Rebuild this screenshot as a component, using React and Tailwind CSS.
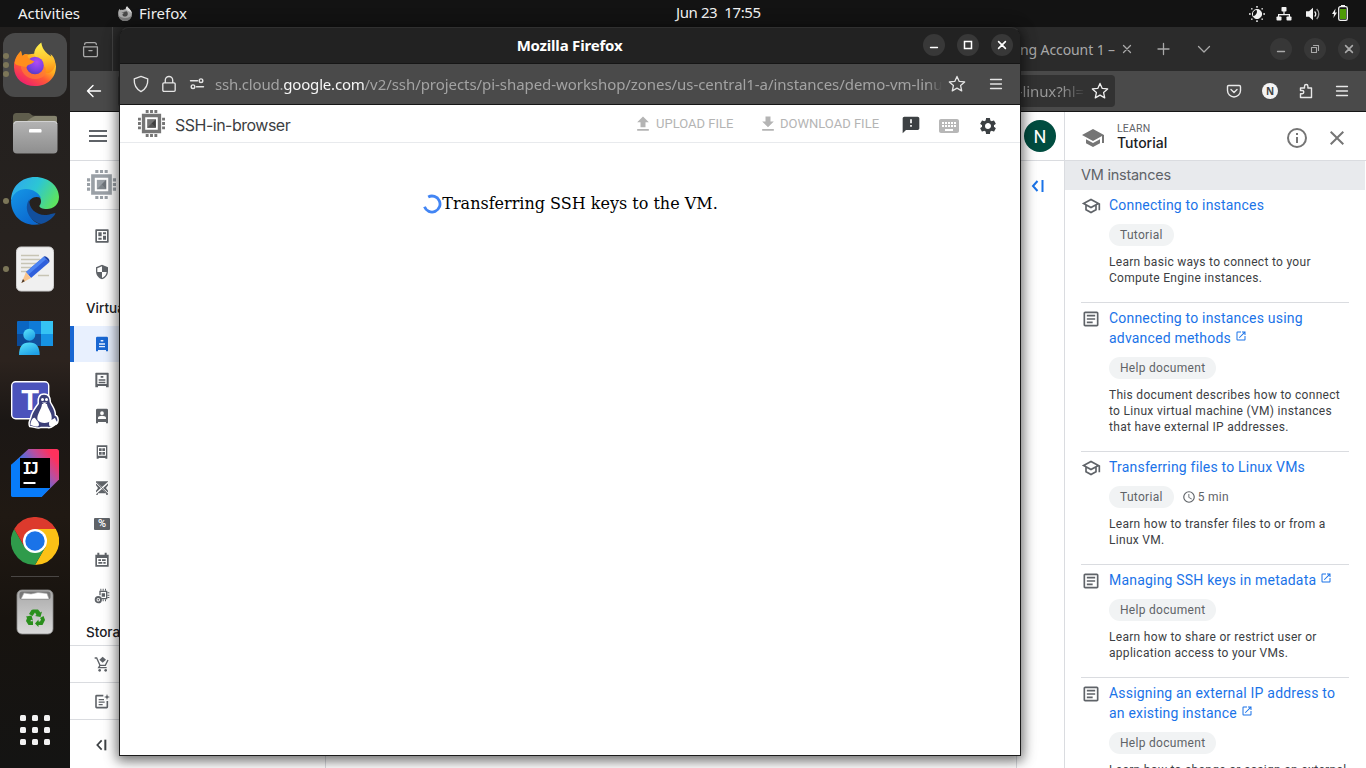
import React from "react";

const UI = "font-['Noto_Sans','Open_Sans',sans-serif]";
const GS = "font-['Inter',sans-serif]";

function Svg({ box = "0 0 24 24", className = "", children }) {
  return (
    <svg viewBox={box} className={`block shrink-0 ${className}`} fill="currentColor">
      {children}
    </svg>
  );
}

function Stroke({ box = "0 0 16 16", className = "", w = 1.3, children }) {
  return (
    <svg
      viewBox={box}
      className={`block shrink-0 ${className}`}
      fill="none"
      stroke="currentColor"
      strokeWidth={w}
      strokeLinecap="round"
      strokeLinejoin="round"
    >
      {children}
    </svg>
  );
}

/* ---------- top bar ---------- */

function SmallFirefox() {
  return (
    <svg viewBox="0 0 16 16" className="block h-[16px] w-[16px]">
      <path d="M1.2 8C1 5.500 1.800 3.800 2.800 2.800L3.400 4.200C4 3.700 5 3.700 5.400 3.900L8.600 3C8.500 1.900 9.300 .9 10.200 .3C10.500 2 14.600 3.500 14.900 7.800C15.100 11.800 12 15 8.100 15S1.300 12 1.200 8z" fill="#a9a9a9" />
      <path d="M1.200 9.500C2 13 5 15 8.100 15C12 15 14.600 12 14.900 9C13 12.500 5 13 1.200 9.500z" fill="#7c7c7c" />
      <path d="M4.200 6.400L7.500 6.800C6.200 7.600 5.200 8 5.500 9C6.500 11.400 10.500 10.800 10.800 8.200C11 6.200 9.600 5.300 9.600 5.300" fill="#494949" />
      <path d="M10.200 .3C10.500 2 14.600 3.500 14.900 7.800C13.800 5.500 11 5 9.800 4C8.200 2.600 9.300 .9 10.200 .3z" fill="#dcdcdc" />
    </svg>
  );
}

function TopBar() {
  return (
    <div className={`flex h-[27px] shrink-0 items-center bg-[#131313] text-[15px] text-[#f2f2f2] ${UI}`}>
      <div className="h-[27px] w-[117px] pl-[18px] leading-[26px] tracking-[-0.05px]">Activities</div>
      <SmallFirefox />
      <div className="h-[27px] w-[543px] pl-[6px] leading-[26px]">Firefox</div>
      <div className="h-[27px] flex-1 whitespace-pre leading-[25px] tracking-[-0.4px]">Jun 23  17:55</div>
      <div className="flex w-[118px] items-center">
        <svg viewBox="0 0 18 18" className="block h-[18px] w-[18px]">
          <circle cx="9" cy="9" r="4.600" fill="none" stroke="#f2f2f2" strokeWidth="1" />
          <path d="M8.500 4.400A4.600 4.600 0 1 1 5 11.300A5 5 0 0 0 8.500 4.400z" fill="#f2f2f2" />
          <g fill="#b9b9b9">
            <rect x="8" y="1" width="2" height="1.700" /><rect x="8" y="15.300" width="2" height="1.700" />
            <rect x="1" y="8" width="1.700" height="2" /><rect x="15.300" y="8" width="1.700" height="2" />
            <rect x="3" y="3" width="1.600" height="1.600" /><rect x="13.400" y="3" width="1.600" height="1.600" />
            <rect x="3" y="13.400" width="1.600" height="1.600" /><rect x="13.400" y="13.400" width="1.600" height="1.600" />
          </g>
        </svg>
        <svg viewBox="0 0 16 16" className="ml-[10px] block h-[16px] w-[16px]" fill="#f2f2f2">
          <rect x="5.500" y="1" width="5" height="4.500" rx=".8" />
          <path d="M7.400 5h1.200v3H14v3h-1.200V9.200H3.200V11H2V8h5.400z" />
          <rect x=".5" y="10.500" width="5" height="4" rx=".8" /><rect x="10.500" y="10.500" width="5" height="4" rx=".8" />
        </svg>
        <svg viewBox="0 0 16 16" className="ml-[13px] block h-[16px] w-[16px]" fill="#f2f2f2">
          <path d="M1 5.200h3L8 1.700v12.600L4 10.800H1z" />
          <path d="M9.600 5.400a3.500 3.500 0 0 1 0 5.200" fill="none" stroke="#f2f2f2" strokeWidth="1.300" />
          <path d="M11.700 3a7 7 0 0 1 0 10" fill="none" stroke="#9a9a9a" strokeWidth="1.300" />
        </svg>
        <svg viewBox="0 0 18 18" className="mb-[2px] ml-[10px] block h-[18px] w-[18px]">
          <path d="M4.500 4.500L1 10h2l-.6 4L6 8.500H4z" fill="#f2f2f2" />
          <path d="M10 1h4v2h-4z" fill="#f2f2f2" />
          <rect x="7.700" y="2.700" width="8.600" height="13.600" rx="1.600" fill="#131313" stroke="#f2f2f2" strokeWidth="1.300" />
          <rect x="9" y="5" width="6" height="10" fill="#4e9a06" />
        </svg>
      </div>
    </div>
  );
}

/* ---------- dock ---------- */

function FirefoxLogo() {
  return (
    <svg viewBox="0 0 48 48" className="block h-12 w-12">
      <defs>
        <linearGradient id="ffBody" x1=".85" y1=".1" x2=".2" y2=".95">
          <stop offset="0" stopColor="#ffe23e" />
          <stop offset=".35" stopColor="#ffab1f" />
          <stop offset=".6" stopColor="#ff5a36" />
          <stop offset="1" stopColor="#ee1c70" />
        </linearGradient>
        <linearGradient id="ffFlame" x1=".5" y1="0" x2=".6" y2="1">
          <stop offset="0" stopColor="#fff14d" />
          <stop offset=".6" stopColor="#ffc02c" />
          <stop offset="1" stopColor="#ff8a16" />
        </linearGradient>
        <radialGradient id="ffGlobe" cx=".6" cy=".3" r=".8">
          <stop offset="0" stopColor="#b04bf5" />
          <stop offset=".6" stopColor="#7a3fe0" />
          <stop offset="1" stopColor="#4a3bb8" />
        </radialGradient>
      </defs>
      <path d="M3 26.500C2.800 20 5 15 10 10L11 15C13 13 15 13 16.500 13.500L29 12C35 11 43 15 45 25C45 37.500 36 45 24 45C12 45 3.300 37.500 3 26.500z" fill="url(#ffBody)" />
      <path d="M30.300 1.500C22.500 7 21.500 14.500 25.500 17C31 19 33.500 24 31.500 29.500C37 35 42 31 44.500 24C44.500 18 41.500 14.500 39.500 13L40.500 17C37 12.500 31.500 10 30.300 1.500z" fill="url(#ffFlame)" />
      <path d="M9.500 20.500C14 19.500 20 19.500 23.300 21.300L34 26C37 33 32 38 24.500 38C15 38 9 31 9.500 20.500z" fill="#ff7a33" opacity=".7" />
      <circle cx="24" cy="24.500" r="8.800" fill="url(#ffGlobe)" />
      <path d="M3.500 22C4.500 17 6.800 13 10 10L11 15C13 13 15 13 17 13.500C16 15 16.500 17 20 19L23.500 20.500C20 24 17 23 15.500 26C11 25 5 25 3.500 22z" fill="#ff8f1c" />
    </svg>
  );
}

function FolderLogo() {
  return (
    <svg viewBox="0 0 48 48" className="block h-12 w-12">
      <defs>
        <linearGradient id="fold" x1="0" y1="0" x2="0" y2="1">
          <stop offset="0" stopColor="#b4b4b4" /><stop offset="1" stopColor="#8e8e8e" />
        </linearGradient>
      </defs>
      <path d="M2 7.500a3.500 3.500 0 0 1 3.500-3.500H17c3 0 3 2.700 6 2.700h20.500A2.500 2.500 0 0 1 46 9.500V20H2z" fill="#5f5d4c" />
      <path d="M20 9L24 7H44a2 2 0 0 1 2 2v6H12z" fill="#85836e" />
      <rect x="2" y="12" width="44.500" height="32.500" rx="4" fill="url(#fold)" />
      <path d="M3 15a3 3 0 0 1 3-2.500h37a3 3 0 0 1 3 2.500" fill="none" stroke="#d2d2d2" strokeWidth="1" />
      <rect x="18" y="20" width="12.500" height="3.600" rx="1.200" fill="#fff" />
    </svg>
  );
}

function EdgeLogo() {
  return (
    <svg viewBox="0 0 48 48" className="block h-12 w-12">
      <defs>
        <linearGradient id="edgeTop" x1="0" y1=".2" x2="1" y2=".6">
          <stop offset="0" stopColor="#2fa8ee" /><stop offset=".5" stopColor="#2cc6d4" /><stop offset="1" stopColor="#5de35f" />
        </linearGradient>
        <linearGradient id="edgeLeft" x1="0" y1="0" x2=".6" y2="1">
          <stop offset="0" stopColor="#1597e6" /><stop offset="1" stopColor="#0b68cf" />
        </linearGradient>
      </defs>
      <path d="M0 24C0 9 11 0 24 0C38 0 48 9.500 48 20C48 28 42 32 36 32C31 32 28 30.500 28.500 28.500C30.500 26.500 31 22 27 18C20 11 5 12 0 24z" fill="url(#edgeTop)" />
      <path d="M0 24C2 16 8 12 15 12C22 12 28 16 30 21C22 18 17 23 17 30C17 40 24 47 30 47C14 51 0 40 0 24z" fill="url(#edgeLeft)" />
      <path d="M18.500 22C12 31 18 44 30 47C37 45 42 41 44.500 36.500C44 35.500 39 38 34 38C25 38 17 31 18.500 22z" fill="#124f9d" />
    </svg>
  );
}

function NotesLogo() {
  return (
    <svg viewBox="0 0 48 48" className="block h-12 w-12">
      <rect x="5.500" y="2" width="37" height="44" rx="4.500" fill="#f0f0f0" stroke="#cfcfcf" strokeWidth="1" />
      <path d="M10 10.500h18M10 14.500h19M10 18.500h19M10 22.500h13M10 26.500h9M27 30.500h11" stroke="#c7c4b4" strokeWidth="1.700" />
      <path d="M15 27L33 11.500L38 17.500L20 33z" fill="#2f5fdb" />
      <path d="M33 11.500L35.300 13.900L17 30L15 27z" fill="#4d84f2" />
      <path d="M15 27L20 33L10.500 38z" fill="#f8c48c" />
      <path d="M12 34L13.800 36.300L10.300 38z" fill="#4d3b2e" />
      <path d="M33 11.500C35 10 40 15 38 17.500z" fill="#1c3fa5" />
    </svg>
  );
}

function PeopleLogo() {
  return (
    <svg viewBox="0 0 48 48" className="block h-12 w-12">
      <defs>
        <linearGradient id="ppl" x1="0" y1="0" x2=".6" y2="1"><stop offset="0" stopColor="#5ce5fb" /><stop offset="1" stopColor="#1fa0e6" /></linearGradient>
      </defs>
      <rect x="6" y="8" width="36" height="25" rx="1" fill="#0a66c2" />
      <rect x="6" y="21" width="12" height="12" fill="#0b4a97" />
      <rect x="18" y="8" width="12" height="13" fill="#0f7bd8" />
      <rect x="18" y="21" width="12" height="12" fill="#12509c" />
      <rect x="30" y="8" width="12" height="13" fill="#35c3f3" />
      <rect x="30" y="21" width="12" height="12" fill="#1693e3" />
      <circle cx="18.300" cy="21.800" r="6" fill="url(#ppl)" />
      <path d="M8 42c0-8 3-12.500 10.300-12.500S28.700 34 28.700 42z" fill="url(#ppl)" />
    </svg>
  );
}

function TeamsLogo() {
  return (
    <svg viewBox="0 0 50 48" className="ml-0.5 block h-12 w-[50px]">
      <rect x=".7" y=".7" width="37" height="37" rx="4" fill="#4b53bc" stroke="#fff" strokeWidth="1.400" />
      <text x="19" y="29" textAnchor="middle" fontFamily="Liberation Sans, sans-serif" fontWeight="700" fontSize="29" fill="#fff">T</text>
      <path d="M33 13c5 0 6.500 4 6.300 8c2 4 5.700 8 5 13c3 1 4 7 1 9c-3 1-5 5-8.500 3.500h-7c-3 2-7-1-11-1c-2-3 0-6 1-9c1-6 5-10 7.500-14c-.5-5 .5-9.500 5.700-9.500z" fill="#3b3f78" stroke="#fff" strokeWidth="1.500" />
      <path d="M31 23h5c0 4 6 9 4.500 16c-3 4-11 4-14 0c-1-6 4-10 4.500-16z" fill="#fff" />
      <path d="M19.500 44c0-3 2-8 4.500-7c2 3 4 4 4 7c-1 3-5 1-8.500 0zM38.500 39c2 1 5-2 5.500-2c1 3 3 4 2.500 6c-2 1-5 3-7.500 2.500c-1.500-1-1-4-.5-6.500z" fill="#fff" />
      <circle cx="31.500" cy="18.500" r="1.500" fill="#fff" /><circle cx="35.500" cy="18.500" r="1.500" fill="#fff" />
      <path d="M31 21.500h5l-2.500 2z" fill="#fff" />
    </svg>
  );
}

function IntelliJLogo() {
  return (
    <svg viewBox="0 0 48 48" className="block h-12 w-12">
      <defs>
        <linearGradient id="ijA" x1=".1" y1=".8" x2=".95" y2=".15">
          <stop offset="0" stopColor="#087cfa" /><stop offset=".4" stopColor="#3f73e8" /><stop offset=".7" stopColor="#b94fa0" /><stop offset=".95" stopColor="#fe315d" />
        </linearGradient>
      </defs>
      <path d="M17.500 0H45.500A2.500 2.500 0 0 1 48 2.500V30.500L30.500 48H2.500A2.500 2.500 0 0 1 0 45.500V16z" fill="url(#ijA)" />
      <path d="M0 16L9 9V39H39L30.500 48H2.500A2.500 2.500 0 0 1 0 45.500z" fill="#087cfa" />
      <rect x="9" y="9" width="30" height="30" fill="#000" />
      <text x="11.500" y="24.500" fontFamily="DejaVu Sans Mono, monospace" fontWeight="700" fontSize="15.500" letterSpacing="-2" fill="#fff">IJ</text>
      <rect x="12.500" y="33" width="12" height="2" fill="#fff" />
    </svg>
  );
}

function ChromeLogo() {
  return (
    <svg viewBox="0 0 48 48" className="block h-12 w-12">
      <path d="M24 24L3.200 12A24 24 0 0 1 44.800 12z" fill="#dc3a2d" />
      <path d="M24 12H44.800A24 24 0 0 1 24 48L34.400 30z" fill="#fbc116" />
      <path d="M13.600 30L3.200 12A24 24 0 0 0 24 48L34.400 30z" fill="#2f9b4b" />
      <path d="M13.600 30L3.200 12L18 16z" fill="#dc3a2d" />
      <circle cx="24" cy="24" r="12" fill="#fff" />
      <circle cx="24" cy="24" r="9.700" fill="#1a73e8" />
    </svg>
  );
}

function TrashLogo() {
  return (
    <svg viewBox="0 0 48 48" className="block h-12 w-12">
      <defs>
        <linearGradient id="trash" x1="0" y1="0" x2="0" y2="1"><stop offset="0" stopColor="#a9a9a9" /><stop offset="1" stopColor="#dadada" /></linearGradient>
      </defs>
      <rect x="6" y="2" width="36" height="44" rx="5" fill="url(#trash)" stroke="#8c8c8c" strokeWidth=".8" />
      <rect x="8.500" y="3.500" width="31" height="8" rx="2.500" fill="#777" />
      <path d="M10 11L13 5L20 6L27 4.500L36 5.500L38 11z" fill="#fff" stroke="#aaa" strokeWidth=".6" />
      <g fill="#2a8f1c">
        <path d="M20.500 22L22 21.500h5l2.500 3l1.500-1l-1.500 5.500l-5.500-1l1.500-1L24 24.500L21.500 28L18 26z" />
        <path d="M32.500 28L34 32L31.500 37H27.500V39L24 35.500L27.500 31.500V33.500H29L30 31.500L29 30z" />
        <path d="M15 28.500L20.500 27.500L22 32.500L20 31.700L19.500 33.300H22V37H17.500L15 33L16 30z" />
      </g>
    </svg>
  );
}

function DockItem({ dots = 0, active = false, children }) {
  return (
    <div className="flex h-16 w-full items-center">
      <div className="relative z-10 flex w-[3px] flex-col items-start gap-[3px] pl-[3px]">
        {Array.from({ length: dots }).map((_, i) => (
          <span key={i} className="block h-[6px] w-[6px] rounded-full bg-[#7c7658]" />
        ))}
      </div>
      <div className={`flex h-16 w-16 shrink-0 items-center justify-center rounded-[12px] ${active ? "bg-[#494949]" : ""}`}>
        {children}
      </div>
    </div>
  );
}

function Dock() {
  return (
    <div className="flex w-[70px] shrink-0 flex-col bg-[linear-gradient(180deg,#211f1e_0%,#27221f_28%,#2c231e_45%,#1b1715_53%,#201913_66%,#17130f_80%,#141413_100%)] pt-[6px]">
      <div className="flex flex-col gap-1">
        <DockItem dots={3} active><FirefoxLogo /></DockItem>
        <DockItem><FolderLogo /></DockItem>
        <DockItem dots={1}><EdgeLogo /></DockItem>
        <DockItem dots={1}><NotesLogo /></DockItem>
        <DockItem><PeopleLogo /></DockItem>
        <DockItem><TeamsLogo /></DockItem>
        <DockItem><IntelliJLogo /></DockItem>
        <DockItem><ChromeLogo /></DockItem>
      </div>
      <div className="mx-[11px] mt-[3px] mb-[3px] h-px bg-[#494644]" />
      <DockItem><TrashLogo /></DockItem>
      <div className="mt-[71px] grid grid-cols-3 gap-[6px] self-center">
        {Array.from({ length: 9 }).map((_, i) => (
          <span key={i} className="block h-[6px] w-[6px] rounded-[1.500px] bg-[#f2f2f2]" />
        ))}
      </div>
    </div>
  );
}

/* ---------- main browser window ---------- */

const STAR = "M8 1.300l2 4.400 4.800.5-3.600 3.200 1 4.700L8 11.700l-4.200 2.400 1-4.700L1.200 6.200 6 5.700z";

function WinButton({ kind, className }) {
  return (
    <span className={`flex h-[22px] w-[22px] items-center justify-center rounded-full ${className}`}>
      <Stroke box="0 0 12 12" className="h-3 w-3" w={kind === "close" ? 1.6 : 1.3}>
        {kind === "min" && <path d="M2.500 8.500h7" />}
        {kind === "max" && <path d="M2.500 2.500h7v7h-7z" strokeWidth="1.500" strokeLinejoin="miter" />}
        {kind === "restore" && <path d="M2.500 4.500h5v5h-5zM4.500 2.500h5v5" strokeWidth="1.100" />}
        {kind === "close" && <path d="M2.600 2.600l6.800 6.800M9.400 2.600l-6.800 6.800" />}
      </Stroke>
    </span>
  );
}

function Cell({ w, children }) {
  return <div className={`flex shrink-0 items-center justify-center ${w}`}>{children}</div>;
}

function TabStrip() {
  return (
    <div className={`flex h-11 shrink-0 bg-[#2b2b2b] text-[#a9a9a9] ${UI}`}>
      <div className="flex w-[43px] items-center justify-center border-r border-[#454545] pr-[2px]">
        <Stroke className="h-[17px] w-[17px]" w={1.2}>
          <path d="M1.500 5.500h13v8a1.200 1.200 0 0 1-1.200 1.200H2.700a1.200 1.200 0 0 1-1.200-1.200zM2.500 3.300q0-1.800 1.800-1.800h7.400q1.800 0 1.800 1.800M6.500 9h3" />
        </Stroke>
      </div>
      <div className="flex flex-1 items-center justify-end">
        <span className="whitespace-nowrap text-[14px] tracking-[-0.1px] text-[#a8a8a8]">ng Account 1 –</span>
        <Cell w="w-[29px] pr-[6px]"><Stroke className="h-4 w-4" w={1.3}><path d="M4.500 4.500l7 7M11.500 4.500l-7 7" /></Stroke></Cell>
        <Cell w="w-[40px]"><Stroke className="h-4 w-4" w={1.3}><path d="M7.500 2.500v11M2 8h11" /></Stroke></Cell>
        <Cell w="w-[40px]"><Stroke className="h-4 w-4" w={1.3}><path d="M2.500 5.500L8 11l5.500-5.500" /></Stroke></Cell>
      </div>
      <div className="ml-10 flex w-[102px] items-center">
        <Cell w="w-[34px]"><WinButton kind="min" className="bg-[#373737]" /></Cell>
        <Cell w="w-[34px]"><WinButton kind="restore" className="bg-[#373737]" /></Cell>
        <Cell w="w-[34px]"><WinButton kind="close" className="bg-[#373737]" /></Cell>
      </div>
    </div>
  );
}

function NavBar() {
  return (
    <div className={`flex h-[41px] shrink-0 items-center border-b border-[#151515] bg-[#4a4a4a] text-[#e8e8e8] ${UI}`}>
      <Cell w="w-[48px]"><Stroke className="h-4 w-4 text-white" w={1.4}><path d="M14.500 8h-13M7 2.500L1.500 8L7 13.500" /></Stroke></Cell>
      <div className="flex h-8 flex-1 items-center justify-end rounded-[4px] bg-[#323232]">
        <span className="bg-gradient-to-r from-[#9a9a9a] from-70% to-[#3b3b3b] bg-clip-text text-[15px] tracking-[-0.1px] text-transparent">n-linux?hl=</span>
        <Cell w="w-[31px]"><Stroke className="h-[18px] w-[18px] text-[#f0f0f0]" w={1.15}><path d={STAR} /></Stroke></Cell>
      </div>
      <div className="ml-[101px] flex w-[150px] items-center">
        <Cell w="w-9">
          <Stroke className="h-4 w-4" w={1.4}><path d="M2.700 2.500h10.600a1.200 1.200 0 0 1 1.200 1.200V7.500a6.500 6.500 0 0 1-13 0V3.700a1.200 1.200 0 0 1 1.200-1.200zM5 6.500l3 3 3-3" /></Stroke>
        </Cell>
        <Cell w="w-9">
          <span className="flex h-4 w-4 items-center justify-center rounded-full bg-[#f4f4f4] text-[10px] font-bold leading-4 text-[#444]">N</span>
        </Cell>
        <Cell w="w-9">
          <Stroke className="h-4 w-4" w={1.4}><path d="M2.500 14.500v-3.800h1.700a1.600 1.600 0 0 0 0-3.200H2.500V5h4V3.200a1.700 1.700 0 0 1 3.400 0V5h3.600v9.500z" /></Stroke>
        </Cell>
        <Cell w="w-9"><Stroke className="h-4 w-4" w={1.3}><path d="M2.500 3.500h11M2.500 8h11M2.500 12.500h11" /></Stroke></Cell>
      </div>
    </div>
  );
}

function ChipLogo({ className, frame, core, shade }) {
  return (
    <svg viewBox="0 0 28 28" className={`block shrink-0 ${className}`}>
      <g fill={frame}>
        <path fillRule="evenodd" d="M4 4h20v20H4zM7.500 7.500v13h13v-13z" />
        <path d="M8 0h3v3H8zM12.500 0h3v3h-3zM17 0h3v3h-3zM8 25h3v3H8zM12.500 25h3v3h-3zM17 25h3v3h-3zM0 8h3v3H0zM0 12.500h3v3H0zM0 17h3v3H0zM25 8h3v3h-3zM25 12.500h3v3h-3zM25 17h3v3h-3z" />
      </g>
      <rect x="9.500" y="9.500" width="9" height="9" fill={core} />
      <path d="M18.500 9.500v9l-4.500-4.500z" fill={shade} />
      <path d="M9.500 18.500h9l-4.500-4.500z" fill={shade} opacity=".6" />
    </svg>
  );
}

const NAV_ICONS = {
  dashboard: (
    <path fillRule="evenodd" d="M3 2h18a1 1 0 0 1 1 1v18a1 1 0 0 1-1 1H3a1 1 0 0 1-1-1V3a1 1 0 0 1 1-1zM4.500 4.500v15h15v-15zM6.500 6.500h5v6h-5zM13.500 6.500h4.500v3h-4.500zM13.500 11.500h4.500v6h-4.500zM6.500 14.500h5v3h-5z" />
  ),
  shield: (
    <path fillRule="evenodd" d="M12 1L3 5v6c0 5.550 3.840 10.740 9 12 5.160-1.260 9-6.450 9-12V5zM12 12h7c-.5 4-3.500 7.800-7 8.900V12H5V6.300l7-3.100z" />
  ),
  server: <path fillRule="evenodd" d="M5 1h14a2 2 0 0 1 2 2v20h-3v-2H6v2H3V3a2 2 0 0 1 2-2zM10 6v2.200h4V6zM7.500 11v2h9v-2zM7.500 15v2h9v-2z" />,
  serverOutline: <path fillRule="evenodd" d="M3 1h18a1 1 0 0 1 1 1v21h-4v-2H6v2H2V2a1 1 0 0 1 1-1zM5 4v14h14V4zM10 6h4v2.500h-4zM7 11h10v2H7zM7 14.800h10v2H7z" />,
  group: <path fillRule="evenodd" d="M5 1h14a2 2 0 0 1 2 2v20h-3v-2H6v2H3V3a2 2 0 0 1 2-2zM12 5a2.800 2.800 0 1 0 0 5.600a2.800 2.800 0 1 0 0-5.600zM6 16.500h12v-2c0-1.500-3.500-2.700-6-2.700s-6 1.200-6 2.700z" />,
  storage: <path fillRule="evenodd" d="M4 2h16v20h-3v-1H7v1H4zM6 4.500v13h12v-13zM7.500 6.500h4v4h-4zM12.500 6.500h4v4h-4zM7.500 12h4v4h-4zM12.500 12h4v4h-4z" />,
  noServer: (
    <g>
      <path d="M3 2h18v20h-3v-2H6v2H3z" />
      <path d="M2 3l20 18M22 3L2 21" stroke="#fff" strokeWidth="2.200" />
      <path d="M2 6.500v11l4-5.500zM22 6.500v11l-4-5.500z" fill="#fff" />
      <path d="M3 3l18 18" stroke="currentColor" strokeWidth="1.200" />
    </g>
  ),
  calendar: <path fillRule="evenodd" d="M5 1h3v3h8V1h3v3h3v18H2V4h3zM4.500 9v10.500h15V9zM6.500 11h4v2.500h-4zM12 11h5.500v2.500H12zM6.500 15h6v2.500h-6zM14 15h3.500v2.500H14z" />,
  chipGear: (
    <g>
      <path fillRule="evenodd" d="M8 4h12v13h-9v-2h7V6h-8v5H8zM11.500 8h5v5h-5z" />
      <path d="M9.500 1h1.500v3H9.500zM13 1h1.500v3H13zM16.500 1H18v3h-1.500zM20 6.500h3V8h-3zM20 10h3v1.500h-3zM20 13.500h3V15h-3zM16.500 17H18v3h-1.500zM13 17h1.500v3H13z" />
      <circle cx="6.500" cy="17.500" r="4" fill="none" stroke="currentColor" strokeWidth="2.800" />
      <circle cx="6.500" cy="17.500" r="1.300" />
    </g>
  ),
  cart: (
    <g>
      <path d="M13 1l5 4.500-5 4.500-5-4.500z" />
      <path d="M1 3h3l5 11h8l4-8" fill="none" stroke="currentColor" strokeWidth="2" />
      <path d="M9 14l-2 3.500h12" fill="none" stroke="currentColor" strokeWidth="2" />
      <circle cx="8.500" cy="21.500" r="2" /><circle cx="17.500" cy="21.500" r="2" />
    </g>
  ),
  note: (
    <g>
      <path d="M14 4H4a1 1 0 0 0-1 1v16a1 1 0 0 0 1 1h15a1 1 0 0 0 1-1V12" fill="none" stroke="currentColor" strokeWidth="2.400" />
      <path d="M7 9h8v2H7zM7 12.700h9v2H7zM7 16.400h6v2H7z" />
      <path d="M19.500 1.500l1.200 3.300 3.300 1.200-3.300 1.200-1.200 3.300-1.200-3.300-3.300-1.200 3.300-1.200z" />
    </g>
  ),
};

function NavRow({ icon, active }) {
  return (
    <div className={`flex h-9 items-center ${active ? "border-l-4 border-[#1967d2] bg-[#e8f0fe] pl-[20px] text-[#1967d2]" : "pl-6 text-[#5f6368]"}`}>
      <Svg className="h-4 w-4">{NAV_ICONS[icon]}</Svg>
    </div>
  );
}

function DiscountRow() {
  return (
    <div className="flex h-9 items-center pl-6">
      <span className="flex h-3 w-4 items-center justify-center rounded-[1px] bg-[#5f6368] font-['Roboto',sans-serif] text-[11px] font-medium leading-3 text-white">%</span>
    </div>
  );
}

function SideNav() {
  return (
    <div className="flex w-[256px] shrink-0 flex-col border-r border-[#dadce0]">
      <div className="flex h-[49px] items-center border-b border-[#dadce0] pb-[1px] pl-[17px]">
        <ChipLogo className="h-[29px] w-[29px]" frame="#9aa0a6" core="#9aa0a6" shade="#6e747a" />
      </div>
      <div className="flex flex-col pt-2">
        <NavRow icon="dashboard" />
        <NavRow icon="shield" />
        <div className={`h-9 pl-4 text-[13.500px] font-medium leading-9 text-[#202124] ${GS}`}>Virtua</div>
        <NavRow icon="server" active />
        <NavRow icon="serverOutline" />
        <NavRow icon="group" />
        <NavRow icon="storage" />
        <NavRow icon="noServer" />
        <DiscountRow />
        <NavRow icon="calendar" />
        <NavRow icon="chipGear" />
        <div className={`h-[31px] pl-4 text-[13.500px] font-medium leading-9 text-[#202124] ${GS}`}>Storag</div>
      </div>
      <div className="border-t border-[#dadce0]"><NavRow icon="cart" /></div>
      <div className="border-t border-[#dadce0]"><NavRow icon="note" /></div>
      <div className="flex items-center border-t border-[#dadce0] pl-6 pt-[17px] text-[#3c4043]">
        <Svg className="h-4 w-4">
          <path d="M11.500 5L5 12l6.500 7" fill="none" stroke="currentColor" strokeWidth="2.600" />
          <path d="M15.500 4h3v16h-3z" />
        </Svg>
      </div>
    </div>
  );
}

/* ---------- learn panel ---------- */

const SCHOOL_OUTLINE = "M12 3L1 9l4 2.180v6L12 21l7-3.820v-6l2-1.090V17h2V9L12 3zm6.820 6L12 12.720 5.180 9 12 5.280 18.820 9zM17 15.990l-5 2.730-5-2.730v-3.720L12 15l5-2.730v3.720z";
const SCHOOL = "M5 13.180v4L12 21l7-3.820v-4L12 17l-7-3.820zM12 3L1 9l11 6 9-4.910V17h2V9L12 3z";
const ARTICLE = "M19 5v14H5V5h14m0-2H5c-1.100 0-2 .9-2 2v14c0 1.100.9 2 2 2h14c1.100 0 2-.9 2-2V5c0-1.100-.9-2-2-2zM14 17H7v-2h7v2zm3-4H7v-2h10v2zm0-4H7V7h10v2z";
const OPEN_NEW = "M19 19H5V5h7V3H5a2 2 0 0 0-2 2v14a2 2 0 0 0 2 2h14c1.100 0 2-.9 2-2v-7h-2v7zM14 3v2h3.590l-9.830 9.830 1.410 1.410L19 6.410V10h2V3h-7z";

const LESSONS = [
  { type: "Tutorial", title: ["Connecting to instances"], text: ["Learn basic ways to connect to your", "Compute Engine instances."] },
  { type: "Help document", title: ["Connecting to instances using", "advanced methods"], text: ["This document describes how to connect", "to Linux virtual machine (VM) instances", "that have external IP addresses."] },
  { type: "Tutorial", time: "5 min", title: ["Transferring files to Linux VMs"], text: ["Learn how to transfer files to or from a", "Linux VM."] },
  { type: "Help document", title: ["Managing SSH keys in metadata"], text: ["Learn how to share or restrict user or", "application access to your VMs."] },
  { type: "Help document", title: ["Assigning an external IP address to", "an existing instance"], text: ["Learn how to change or assign an external"] },
];

function Lesson({ item, first }) {
  const doc = item.type === "Help document";
  return (
    <div className={`flex shrink-0 pt-[5px] pb-4 ${first ? "" : "border-t border-[#dadce0]"}`}>
      <Svg className="mt-[1px] h-5 w-5 text-[#5f6368]"><path d={doc ? ARTICLE : SCHOOL_OUTLINE} /></Svg>
      <div className="ml-2 flex-1 whitespace-nowrap">
        <div className="text-[14px] leading-5 tracking-[0.2px] text-[#1a73e8]">
          {item.title.map((line, i) => (
            <div key={line} className="flex">
              {line}
              {doc && i === item.title.length - 1 && <Svg className="ml-1 mt-[2px] h-3 w-3"><path d={OPEN_NEW} /></Svg>}
            </div>
          ))}
        </div>
        <div className="mt-[9px] flex items-center">
          <span className="h-[22px] rounded-full bg-[#f1f3f4] px-[11px] text-[12px] leading-[22px] tracking-[0.3px] text-[#5f6368]">{item.type}</span>
          {item.time && (
            <span className="ml-2 flex items-center gap-[2px] text-[12px] leading-[22px] tracking-[0.3px] text-[#5f6368]">
              <Svg className="h-[14px] w-[14px]"><path d="M12 2a10 10 0 1 0 0 20a10 10 0 1 0 0-20zm0 18a8 8 0 1 1 0-16a8 8 0 0 1 0 16zm.5-13H11v6l5.250 3.150.75-1.230-4.500-2.670z" /></Svg>
              {item.time}
            </span>
          )}
        </div>
        <div className="mt-2 text-[12px] leading-4 tracking-[0.3px] text-[#3c4043]">
          {item.text.map((line) => <div key={line}>{line}</div>)}
        </div>
      </div>
    </div>
  );
}

function LearnPanel() {
  return (
    <div className="flex w-[302px] shrink-0 flex-col overflow-hidden border-l border-[#dadce0] font-['Roboto',sans-serif]">
      <div className="flex h-[49px] shrink-0 items-center border-b border-[#dadce0] pl-4">
        <Svg className="mt-1 h-6 w-6 text-[#757575]"><path d={SCHOOL} /></Svg>
        <div className="ml-3 flex w-[168px] flex-col">
          <span className="text-[10.500px] leading-[13px] tracking-[0.2px] text-[#5f6368]">LEARN</span>
          <span className={`text-[14px] font-medium leading-4 text-[#202124] ${GS}`}>Tutorial</span>
        </div>
        <Svg className="mt-1 h-6 w-6 text-[#757575]"><path d="M11 7h2v2h-2zm0 4h2v6h-2zm1-9a10 10 0 1 0 0 20a10 10 0 1 0 0-20zm0 18a8 8 0 1 1 0-16a8 8 0 0 1 0 16z" /></Svg>
        <Svg className="mt-1 ml-4 h-6 w-6 text-[#757575]"><path d="M19 6.410L17.590 5 12 10.590 6.410 5 5 6.410 10.590 12 5 17.590 6.410 19 12 13.410 17.590 19 19 17.590 13.410 12z" /></Svg>
      </div>
      <div className={`mr-px h-[29px] shrink-0 bg-[#e8eaed] pl-4 text-[14.500px] leading-[28px] tracking-[-0.25px] text-[#5f6368] ${GS}`}>VM instances</div>
      <div className="flex min-h-0 flex-1 flex-col overflow-hidden pl-4 pr-[17px]">
        {LESSONS.map((item, i) => <Lesson key={item.title[0]} item={item} first={i === 0} />)}
      </div>
    </div>
  );
}

function MainBrowser() {
  return (
    <div className="flex min-w-0 flex-1 flex-col bg-white">
      <TabStrip />
      <NavBar />
      <div className="flex min-h-0 flex-1">
        <div className="flex min-w-0 flex-1 flex-col">
          <div className="flex h-[49px] shrink-0 items-center justify-between border-b border-[#dadce0] pl-[19px] pr-2">
            <span className="flex w-[18px] flex-col gap-[3px]">
              <span className="h-[2px] bg-[#5f6368]" /><span className="h-[2px] bg-[#5f6368]" /><span className="h-[2px] bg-[#5f6368]" />
            </span>
            <span className="flex h-8 w-8 items-center justify-center rounded-full bg-[#004d40] font-['Roboto',sans-serif] text-[18px] text-white">N</span>
          </div>
          <div className="flex min-h-0 flex-1">
            <SideNav />
            <div className="flex-1" />
            <div className="flex w-12 justify-center border-l border-[#dadce0] pt-[17px] text-[#1a73e8]">
              <svg viewBox="0 0 16 16" className="mr-[5px] block h-4 w-4" fill="none" stroke="currentColor" strokeWidth="2">
                <path d="M7.500 3L3 8l4.500 5M12.500 2v12" />
              </svg>
            </div>
          </div>
        </div>
        <LearnPanel />
      </div>
    </div>
  );
}

/* ---------- popup window ---------- */

function PopupToolbar() {
  return (
    <div className={`flex h-[41px] shrink-0 items-center border-b border-[#151515] bg-[#4a4a4a] pl-3 text-[#e4e4e4] ${UI}`}>
      <Stroke className="h-[18px] w-[18px]" w={1.2}><path d="M8 1.200l6 2.200c.3 5-1.500 9-6 11.400C3.500 12.400 1.700 8.400 2 3.400z" /></Stroke>
      <Stroke className="ml-[10px] h-[18px] w-[18px]" w={1.2}><path d="M3.500 7h9a1 1 0 0 1 1 1v5.500a1 1 0 0 1-1 1h-9a1 1 0 0 1-1-1V8a1 1 0 0 1 1-1zM4.700 7V4.600a3.300 3.300 0 0 1 6.600 0V7" /></Stroke>
      <Stroke className="ml-[11px] h-4 w-4" w={1.4}><path d="M1.500 4.700h7M7.500 10.700h7" /><circle cx="12" cy="4.700" r="1.800" /><circle cx="4" cy="10.700" r="1.800" /></Stroke>
      <div className="ml-[10px] w-[727px] overflow-hidden whitespace-nowrap text-[15px] leading-[22px] tracking-[-0.06px] text-[#a3a3a3] [mask-image:linear-gradient(90deg,#000_98%,transparent)]">
        <span className="tracking-[-0.2px]">ssh.cloud.<span className="text-[#f6f6f6]">google.com</span></span>/v2/ssh/projects/pi-shaped-workshop/zones/us-central1-a/instances/demo-vm-linux
      </div>
      <Stroke className="ml-[6px] h-[18px] w-[18px]" w={1.15}><path d={STAR} /></Stroke>
      <Stroke className="ml-[22px] h-4 w-4" w={1.3}><path d="M2.500 3.500h11M2.500 8h11M2.500 12.500h11" /></Stroke>
    </div>
  );
}

function PopupPage() {
  return (
    <div className="flex flex-1 flex-col bg-white">
      <div className="flex h-[38px] items-center border-b border-[#e8eaed] pl-[18px]">
        <ChipLogo className="h-[27px] w-[27px]" frame="#757575" core="#757575" shade="#3f3f3f" />
        <div className={`ml-[10px] w-[458px] pt-[3px] text-[16px] tracking-[-0.5px] text-[#3c4043] ${GS}`}>SSH-in-browser</div>
        <div className="flex items-center pt-[1px] font-['Roboto',sans-serif] text-[13px] text-[#b4b4b4]">
          <Svg className="h-[20px] w-[20px]"><path d="M5 20h14v-2H5v2zm0-10h4v6h6v-6h4l-7-7-7 7z" /></Svg>
          <span className="ml-[3px] w-[102px]">UPLOAD FILE</span>
          <Svg className="h-[20px] w-[20px]"><path d="M5 20h14v-2H5v2zM19 9h-4V3H9v6H5l7 7 7-7z" /></Svg>
          <span className="ml-[2px] w-[121px]">DOWNLOAD FILE</span>
        </div>
        <Svg className="mt-[3px] h-5 w-5 text-[#3c4043]"><path d="M20 2H4c-1.100 0-1.990.9-1.990 2L2 22l4-4h14c1.100 0 2-.9 2-2V4c0-1.100-.9-2-2-2zm-7 12h-2v-2h2v2zm0-4h-2V5h2v5z" /></Svg>
        <Svg className="mt-[5px] ml-[16px] h-6 w-6 text-[#b7b7b7]"><path d="M20 5H4c-1.100 0-1.990.9-1.990 2L2 17c0 1.100.9 2 2 2h16c1.100 0 2-.9 2-2V7c0-1.100-.9-2-2-2zm-9 3h2v2h-2V8zm0 3h2v2h-2v-2zM8 8h2v2H8V8zm0 3h2v2H8v-2zm-1 2H5v-2h2v2zm0-3H5V8h2v2zm9 7H8v-2h8v2zm0-4h-2v-2h2v2zm0-3h-2V8h2v2zm3 3h-2v-2h2v2zm0-3h-2V8h2v2z" /></Svg>
        <Svg className="mt-[5px] ml-[17px] h-5 w-5 text-[#3c4043]"><path d="M19.140 12.940c.04-.3.060-.61.060-.94 0-.32-.02-.64-.07-.94l2.030-1.580a.49.49 0 0 0 .12-.61l-1.920-3.320a.488.488 0 0 0-.59-.22l-2.390.96c-.5-.38-1.030-.7-1.620-.94l-.36-2.540a.484.484 0 0 0-.48-.41h-3.840c-.24 0-.43.17-.47.41l-.36 2.540c-.59.24-1.130.57-1.620.94l-2.390-.96c-.22-.08-.47 0-.59.22L2.740 8.870c-.12.21-.08.47.12.61l2.030 1.580c-.05.3-.09.63-.09.94s.02.64.07.94l-2.030 1.580a.49.49 0 0 0-.12.61l1.920 3.320c.12.22.37.29.59.22l2.390-.96c.5.38 1.030.7 1.620.94l.36 2.540c.05.24.24.41.48.41h3.840c.24 0 .44-.17.47-.41l.36-2.540c.59-.24 1.130-.56 1.620-.94l2.390.96c.22.08.47 0 .59-.22l1.920-3.320c.12-.22.070-.47-.12-.61l-2.010-1.580zM12 15.600A3.610 3.610 0 0 1 8.400 12c0-1.980 1.620-3.600 3.600-3.600s3.600 1.620 3.600 3.600-1.620 3.600-3.600 3.600z" /></Svg>
      </div>
      <div className="mt-[50px] flex items-center justify-center font-['DejaVu_Serif',serif] text-[16px] leading-[22px] text-black">
        <svg viewBox="0 0 20 20" className="block h-[20px] w-[20px]" fill="none" stroke="#4285f4" strokeWidth="2.800">
          <path d="M6.200 3A8 8 0 1 1 2.500 12.800" />
        </svg>
        Transferring SSH keys to the VM.
      </div>
    </div>
  );
}

function PopupWindow() {
  return (
    <div className="absolute left-[119px] top-[27px] flex h-[729px] w-[902px] flex-col overflow-hidden rounded-t-[10px] border border-[#1b1b1b] border-t-[#303030] shadow-[0_3px_12px_2px_rgba(0,0,0,0.5),0_0_20px_rgba(0,0,0,0.15)]">
      <div className={`flex h-9 shrink-0 items-center border-b border-[#161616] bg-[#222222] pb-[2px] pr-px text-white ${UI}`}>
        <div className="w-[102px]" />
        <div className="flex-1 text-center text-[15px] font-bold leading-5 tracking-[-0.2px]">Mozilla Firefox</div>
        <div className="flex w-[102px] items-center">
          <Cell w="w-[34px]"><WinButton kind="min" className="bg-[#383838]" /></Cell>
          <Cell w="w-[34px]"><WinButton kind="max" className="bg-[#383838]" /></Cell>
          <Cell w="w-[34px]"><WinButton kind="close" className="bg-[#383838]" /></Cell>
        </div>
      </div>
      <PopupToolbar />
      <PopupPage />
    </div>
  );
}

export default function App() {
  return (
    <div className="relative flex h-[768px] w-[1366px] flex-col overflow-hidden bg-[#1d1a18]">
      <TopBar />
      <div className="relative flex min-h-0 flex-1">
        <Dock />
        <MainBrowser />
      </div>
      <PopupWindow />
    </div>
  );
}
